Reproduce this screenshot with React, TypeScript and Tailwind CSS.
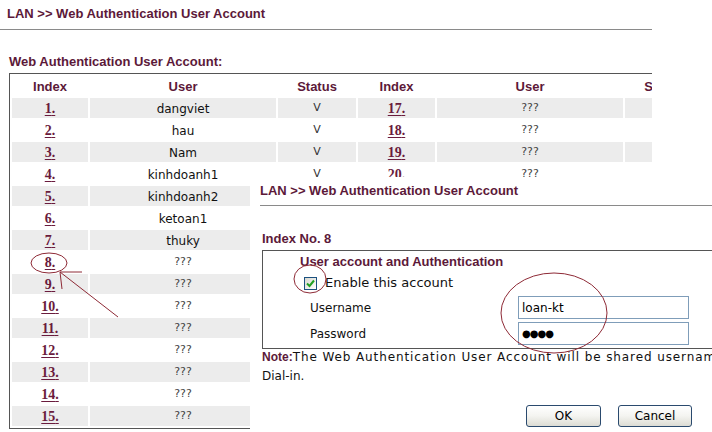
import React from "react";

const maroon = "text-[#5c1939]";
const sans = "font-['Liberation_Sans',Arial,sans-serif]";
const dejavu = "font-['DejaVu_Sans',Verdana,sans-serif]";

const leftUsers = ["dangviet", "hau", "Nam", "kinhdoanh1", "kinhdoanh2", "ketoan1", "thuky"];

type Row = { idx: number; user: string; status: string };

// status values under the popup / past the clip edge are never seen, so left blank
const rows: Row[][] = Array.from({ length: 15 }, (_, i) => {
  const l = i + 1;
  const r = i + 17;
  return [
    { idx: l, user: leftUsers[i] ?? "???", status: i < 4 ? "V" : "" },
    { idx: r, user: "???", status: "" },
  ];
});

function IndexLink({ n }: { n: number }) {
  return (
    <a className="font-['Liberation_Serif','Times_New_Roman',serif] text-[14px] font-bold text-[#6a1b3d] underline underline-offset-2">
      {n}.
    </a>
  );
}

function Cell({ gray, children }: { gray: boolean; children: React.ReactNode }) {
  return (
    <div className={`h-[20px] pt-[1px] flex items-center justify-center ${gray ? "bg-[#ececec]" : "bg-white"}`}>
      {children}
    </div>
  );
}

function UserText({ name }: { name: string }) {
  if (name === "???") return <span className={`${dejavu} text-[11px] text-[#444]`}>???</span>;
  return <span className={`${dejavu} text-[12px] text-[#111]`}>{name}</span>;
}

function AccountTable() {
  const heads = ["Index", "User", "Status", "Index", "User", "Status"];
  return (
    <div className="ml-[9px] border border-[#555] p-[2px] w-max">
      <div className="grid grid-cols-[76px_186px_78px_77px_186px_78px] gap-[2px]">
        {heads.map((h, i) => (
          <div key={i} className={`h-[20px] pt-[1px] flex items-center justify-center ${sans} text-[13px] font-bold ${maroon}`}>
            {h}
          </div>
        ))}
        {rows.map((pair, ri) => {
          const gray = ri % 2 === 0;
          return pair.map((r, ci) => (
            <React.Fragment key={`${ri}-${ci}`}>
              <Cell gray={gray}>
                <IndexLink n={r.idx} />
              </Cell>
              <Cell gray={gray}>
                <UserText name={r.user} />
              </Cell>
              <Cell gray={gray}>
                <span className={`${dejavu} text-[11px] text-[#333]`}>{r.status}</span>
              </Cell>
            </React.Fragment>
          ));
        })}
      </div>
    </div>
  );
}

function XpButton({ label, w }: { label: string; w: string }) {
  return (
    <button
      className={`${w} h-[22px] rounded-[3px] border border-[#2a4a6e] bg-gradient-to-b from-white via-[#f4f4f0] to-[#dcdcd4] ${dejavu} text-[12px] text-black`}
    >
      {label}
    </button>
  );
}

function EditPopup() {
  return (
    <div className="absolute left-[250px] top-[177px] w-[462px] h-[255px] bg-white overflow-hidden">
      <div className={`ml-[10px] h-[29px] pt-[1px] leading-[26px] border-b border-[#8a8a8a] ${sans} text-[13px] font-bold ${maroon} whitespace-nowrap`}>
        LAN &gt;&gt; Web Authentication User Account
      </div>
      <div className={`mt-[24px] pl-[12px] h-[16px] pt-[1px] leading-[16px] ${sans} text-[13px] font-bold ${maroon}`}>
        Index No. 8
      </div>
      <div className="mt-[4px] ml-[12px] h-[99px] border-l border-t border-b border-[#555] flex flex-col">
        <div className={`mt-[2px] pl-[37px] h-[17px] leading-[18px] ${sans} text-[13px] font-bold ${maroon} whitespace-nowrap`}>
          User account and Authentication
        </div>
        <div className="mt-[4px] h-[18px] pl-[41px] flex items-center gap-[8px]">
          <span className="w-[13px] h-[13px] border border-[#1c5180] bg-gradient-to-br from-[#d8d8d0] to-white flex items-center justify-center">
            <svg width="9" height="9" viewBox="0 0 9 9">
              <path d="M1 4.5 L3.5 7 L8 1.5" fill="none" stroke="#22a022" strokeWidth="2" />
            </svg>
          </span>
          <span className={`${dejavu} text-[13px] text-[#111]`}>Enable this account</span>
        </div>
        <div className="mt-[4px] h-[23px] flex items-center">
          <span className={`pl-[47px] w-[255px] ${dejavu} text-[12px] text-[#111]`}>Username</span>
          <div className="w-[171px] h-[23px] border border-[#7f9db9] bg-white pl-[3px] flex items-center">
            <span className={`${dejavu} text-[12px] text-black`}>loan-kt</span>
          </div>
        </div>
        <div className="mt-[3px] h-[23px] flex items-center">
          <span className={`pl-[47px] w-[255px] ${dejavu} text-[12px] text-[#111]`}>Password</span>
          <div className="w-[171px] h-[23px] border border-[#7f9db9] bg-white pl-[3px] flex items-center">
            <span className="font-['DejaVu_Sans',sans-serif] text-[10px] tracking-[-1px] text-black">●●●●</span>
          </div>
        </div>
      </div>
      <div className={`pl-[12px] -mt-[1px] leading-[19px] ${dejavu} text-[12px] text-[#111] whitespace-nowrap`}>
        <div>
          <span className={`${sans} text-[12px] font-bold ${maroon}`}>Note:</span>
          <span className="tracking-[0.9px]">
            The Web Authentication User Account will be shared username and password with PPP
          </span>
        </div>
        <div>Dial-in.</div>
      </div>
      <div className="mt-[19px] pr-[20px] flex justify-end gap-[17px]">
        <XpButton label="OK" w="w-[75px]" />
        <XpButton label="Cancel" w="w-[74px]" />
      </div>
    </div>
  );
}

function Annotations() {
  return (
    <svg className="absolute inset-0 pointer-events-none" width="712" height="432" viewBox="0 0 712 432">
      <g fill="none" stroke="#8e2a36" strokeWidth="1">
        <ellipse cx="49" cy="263" rx="18" ry="10" />
        <line x1="60" y1="272" x2="118" y2="317" />
        <line x1="60" y1="272" x2="82" y2="272" />
        <line x1="60" y1="272" x2="62" y2="289" />
        <ellipse cx="310" cy="279" rx="16" ry="14" />
        <ellipse cx="554" cy="313" rx="53" ry="40" />
      </g>
    </svg>
  );
}

export default function App() {
  return (
    <div className="relative w-[712px] h-[432px] overflow-hidden bg-white">
      <div className="w-[652px] h-[432px] overflow-hidden">
        <div className={`h-[30px] leading-[28px] pl-[7px] border-b border-[#8a8a8a] ${sans} text-[13px] font-bold ${maroon}`}>
          LAN &gt;&gt; Web Authentication User Account
        </div>
        <div className={`mt-[24px] h-[16px] leading-[16px] pl-[9px] ${sans} text-[13px] font-bold ${maroon}`}>
          Web Authentication User Account:
        </div>
        <div className="mt-[3px]">
          <AccountTable />
        </div>
      </div>
      <EditPopup />
      <Annotations />
    </div>
  );
}
